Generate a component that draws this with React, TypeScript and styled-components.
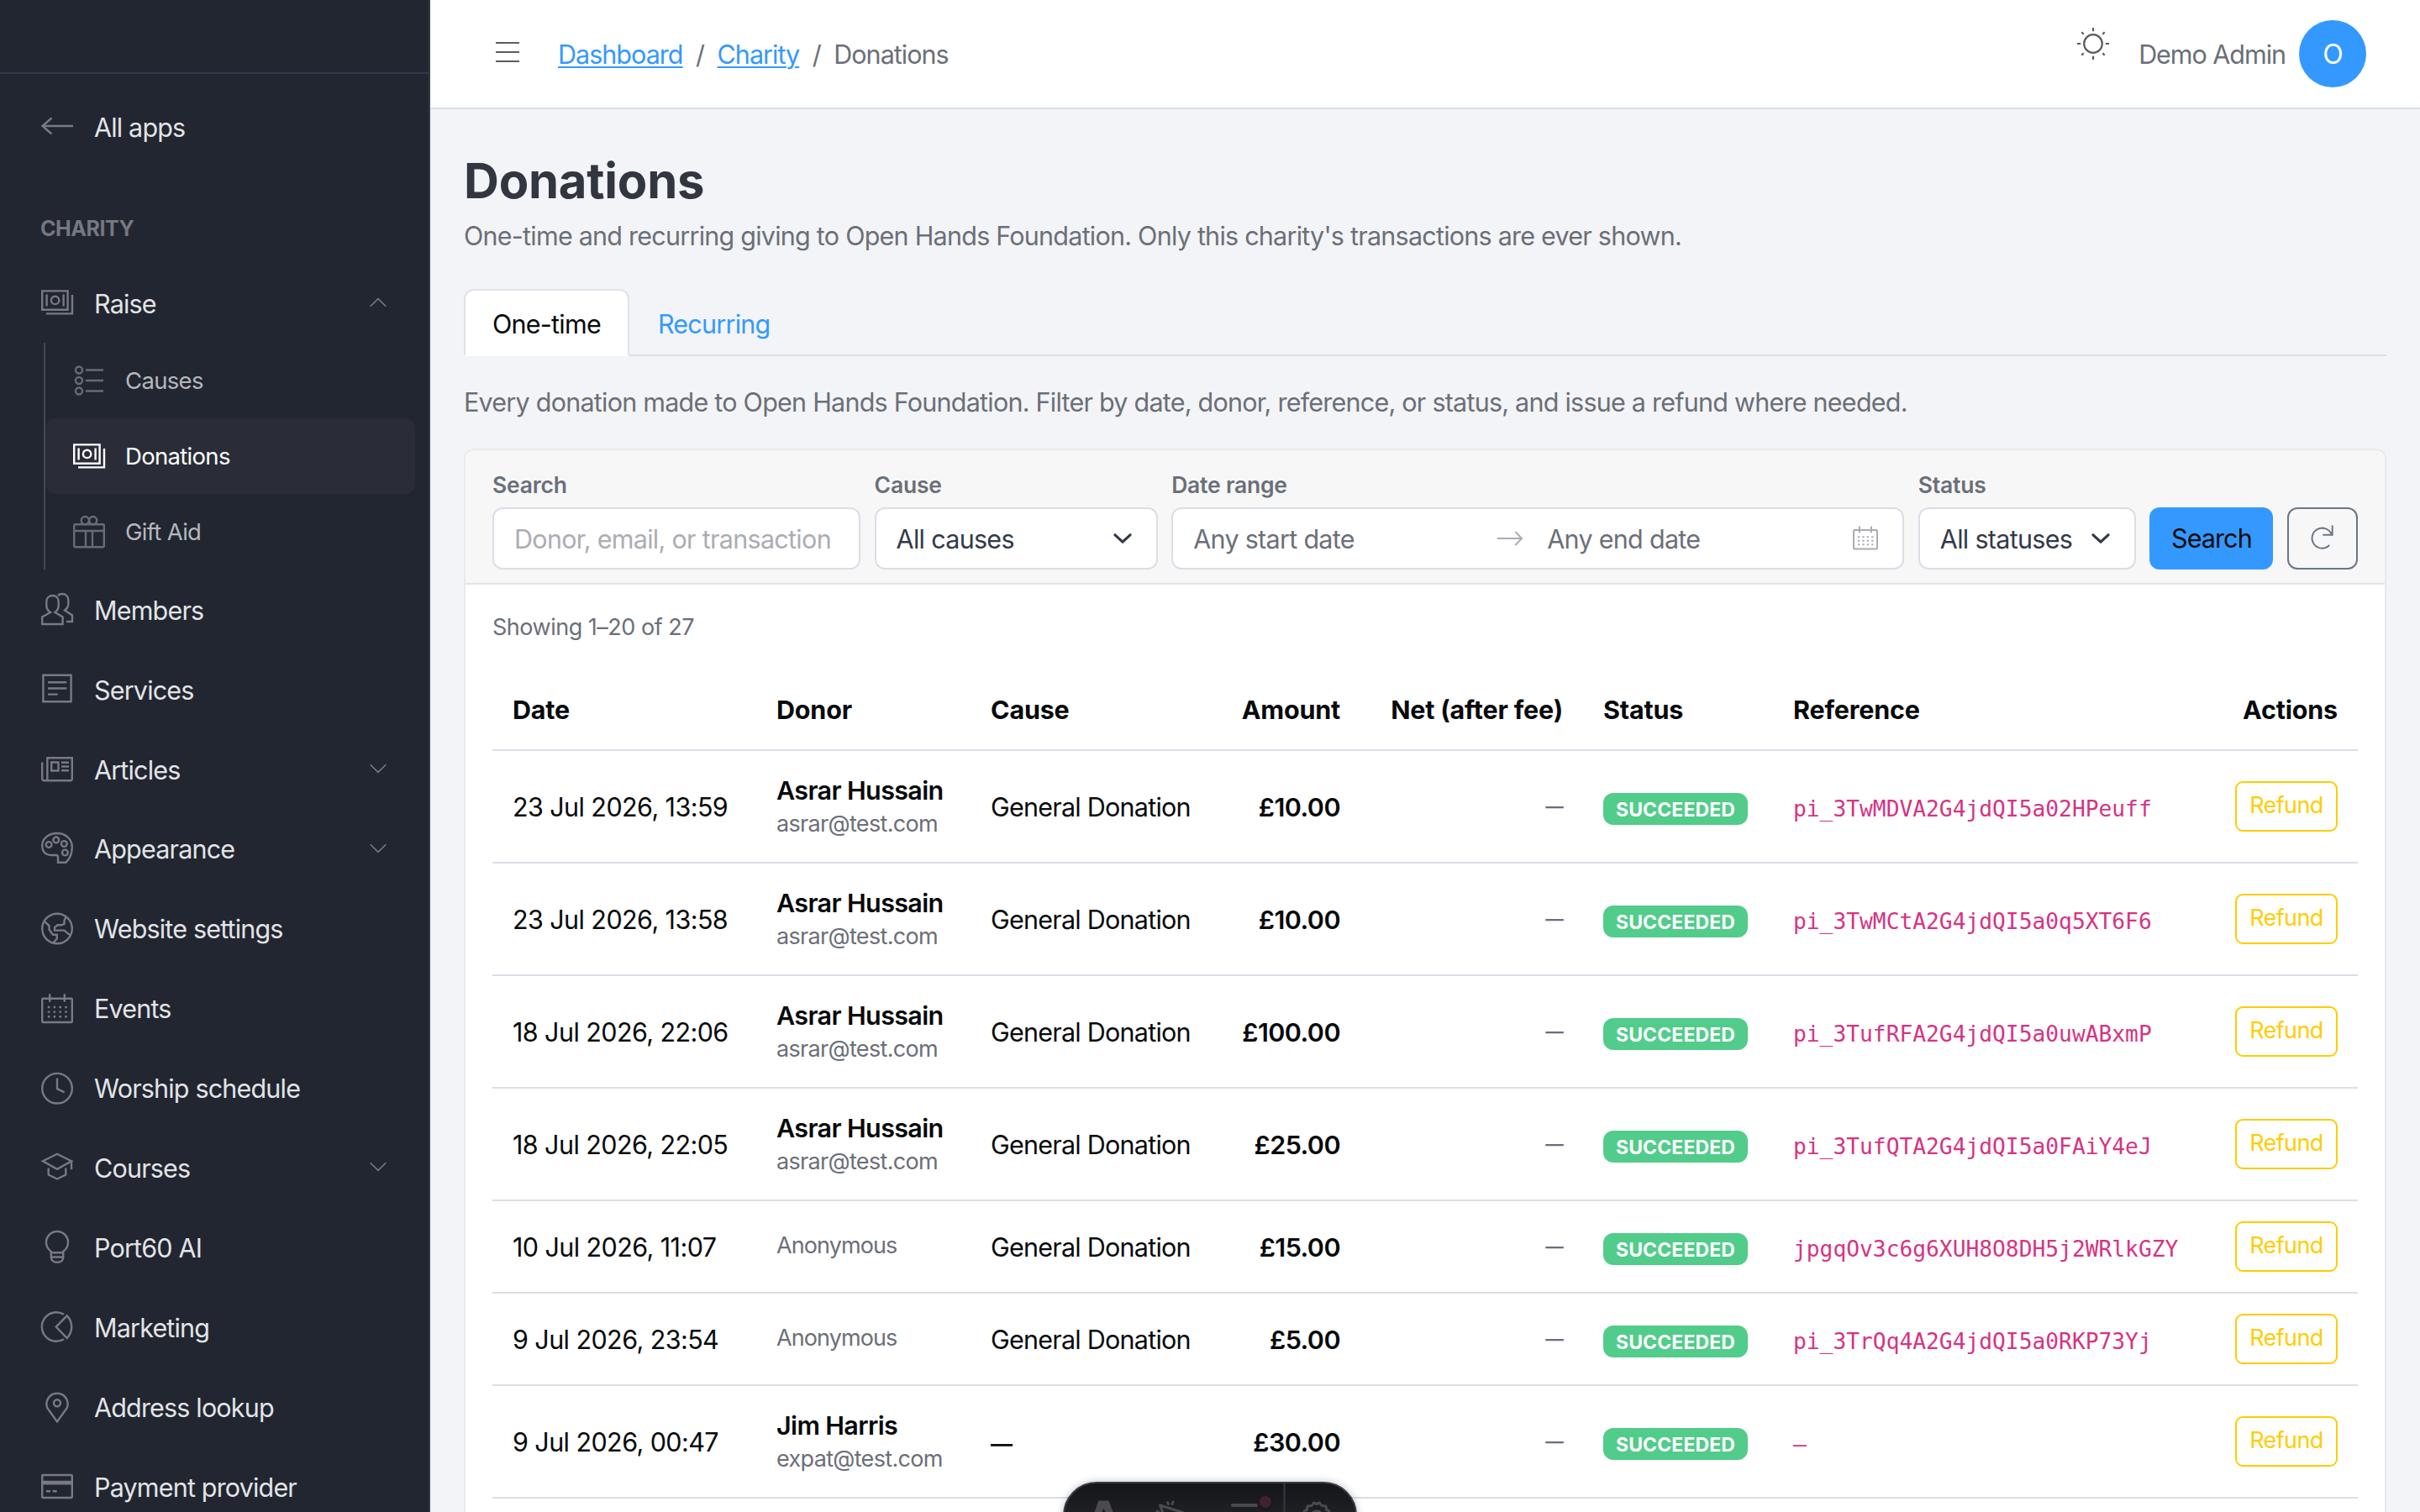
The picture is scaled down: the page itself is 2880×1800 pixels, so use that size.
import {memo, type ReactNode} from "react";
import styled, {createGlobalStyle, css} from "styled-components";

type IconName =
    | 'back' | 'money' | 'list' | 'gift' | 'people' | 'description' | 'newspaper' | 'palette'
    | 'globe' | 'calendar' | 'clock' | 'education' | 'bulb' | 'pie' | 'pin' | 'card';

const ICONS: Record<IconName, ReactNode> = {
    back: <path d="M13.5 10.5 2.5 20l11 9.5M2.5 20H39"/>,
    money: (
        <>
            <path d="M2.2 6.4h30.4v22.4H2.2zM38 11v22.4H7M7.6 10.5v14M27.6 10.5v14"/>
            <circle cx="17.6" cy="17.4" r="4.7"/>
        </>
    ),
    list: (
        <>
            <circle cx="8" cy="7.5" r="4"/>
            <circle cx="8" cy="20" r="4"/>
            <circle cx="8" cy="32.5" r="4"/>
            <path d="M16 7.5h21M16 20h21M16 32.5h21"/>
        </>
    ),
    gift: (
        <>
            <rect x="2.2" y="11.2" width="35.6" height="27" rx="1.5"/>
            <path d="M2.2 19h35.6M16 19v19M24 19v19"/>
            <circle cx="15.3" cy="6.6" r="4.6"/>
            <circle cx="24.7" cy="6.6" r="4.6"/>
        </>
    ),
    people: (
        <>
            <path d="M12 24C9 22 7.3 19 7.3 16v-4.5C7.3 7 10.3 4 14.5 4s7.2 3 7.2 7.5V16c0 3-1.7 6-4.3 8l9.2 5.5V38H2.2v-8.5z"/>
            <path d="M20.8 4C22.3 2.7 24 2 26 2c4.3 0 7.3 3 7.3 7.5V14c0 3-1.6 5.6-4.3 7.5l9 6V35h-7"/>
        </>
    ),
    description: <path d="M3.4 3.7h33.2v31.5H3.4zM9 12.3h22.3M9 19.5h22.3M9 26.6h11.7"/>,
    newspaper: <path d="M8.3 34.3V7.3h29.5V32a2.3 2.3 0 0 1-2.3 2.3H5A2.8 2.8 0 0 1 2.2 31.5v-19M13.2 12.5h8.3v10h-8.3zM25 12.8h9M25 17.5h9M25 22.3h9"/>,
    palette: (
        <>
            <path d="M20 2C10 2 2.2 8 2.2 16.5S7.5 28 12 28h6.5c1.700 0 2.5.9 2.5 2.5v6.2h9.5C35.5 32 37.8 25 37.8 18.5 37.8 9 30 2 20 2z"/>
            <circle cx="10.1" cy="15.5" r="3.4"/>
            <circle cx="18.8" cy="9.9" r="3.4"/>
            <circle cx="28.3" cy="14.5" r="3.4"/>
            <circle cx="29.4" cy="25" r="3.4"/>
        </>
    ),
    globe: (
        <>
            <circle cx="20" cy="20.5" r="17.8"/>
            <path d="M5.5 12.5 10.5 17v4.5L15 27.7h4.7v4.8L15.5 37.5M30.5 6.500 28.5 11v4l-3.5 1.2h-4.5L17 19v3.6h11.5l3.5 3 4 3"/>
        </>
    ),
    calendar: (
        <>
            <rect x="2.2" y="8.7" width="35.6" height="28.3" rx="1"/>
            <path d="M11.2 3.2v9.6M28.8 3.2v9.6"/>
            <path d="M8.800 19h24M8.8 24.6h24M8.8 30.2h24" strokeDasharray="2.6 4.2"/>
        </>
    ),
    clock: (
        <>
            <circle cx="20" cy="20.7" r="17.8"/>
            <path d="M20 8.5v12.7l8.7 4.2"/>
        </>
    ),
    education: <path d="M3 13.3 20 4.8l17 8.5L20 22.8zM37 13v10.3M9.7 21.5v8L20 34.5l10.3-5v-8"/>,
    bulb: (
        <>
            <path d="M12.8 27.3v-1.5A13 13 0 1 1 27.2 25.8v1.5z"/>
            <path d="M12.8 27v5.5h14.4V27M12.8 32.5c0 3.7 2.7 6.3 7.2 6.3s7.2-2.6 7.2-6.3"/>
        </>
    ),
    pie: <path d="M28 5.8A17.2 17.2 0 1 0 28 35.2M18.7 20.6 31.7 7.3C39 14.5 39 26.5 31.7 34z"/>,
    pin: (
        <>
            <path d="M20 38.5 8.5 22.5A12.600 12.6 0 1 1 31.5 22.5z"/>
            <circle cx="20" cy="16.3" r="4"/>
        </>
    ),
    card: (
        <>
            <rect x="2.2" y="7" width="35.6" height="27" rx="1"/>
            <path d="M2.2 16.1h35.6" strokeWidth="4.8"/>
            <path d="M7 26.2h5M14.7 26.2h5"/>
        </>
    ),
};

type NavEntry = {
    icon: IconName;
    label: string;
    expandable?: boolean;
}

const RAISE_ITEMS: NavEntry[] = [
    {icon: 'list', label: 'Causes'},
    {icon: 'money', label: 'Donations'},
    {icon: 'gift', label: 'Gift Aid'},
];

const NAV_ITEMS: NavEntry[] = [
    {icon: 'people', label: 'Members'},
    {icon: 'description', label: 'Services'},
    {icon: 'newspaper', label: 'Articles', expandable: true},
    {icon: 'palette', label: 'Appearance', expandable: true},
    {icon: 'globe', label: 'Website settings'},
    {icon: 'calendar', label: 'Events'},
    {icon: 'clock', label: 'Worship schedule'},
    {icon: 'education', label: 'Courses', expandable: true},
    {icon: 'bulb', label: 'Port60 AI'},
    {icon: 'pie', label: 'Marketing'},
    {icon: 'pin', label: 'Address lookup'},
    {icon: 'card', label: 'Payment provider'},
];

type Donation = {
    date: string;
    donor?: string;
    email?: string;
    cause?: string;
    amount: string;
    reference: string;
}

const DONATIONS: Donation[] = [
    {date: '23 Jul 2026, 13:59', donor: 'Asrar Hussain', email: 'asrar@test.com', cause: 'General Donation', amount: '£10.00', reference: 'pi_3TwMDVA2G4jdQI5a02HPeuff'},
    {date: '23 Jul 2026, 13:58', donor: 'Asrar Hussain', email: 'asrar@test.com', cause: 'General Donation', amount: '£10.00', reference: 'pi_3TwMCtA2G4jdQI5a0q5XT6F6'},
    {date: '18 Jul 2026, 22:06', donor: 'Asrar Hussain', email: 'asrar@test.com', cause: 'General Donation', amount: '£100.00', reference: 'pi_3TufRFA2G4jdQI5a0uwABxmP'},
    {date: '18 Jul 2026, 22:05', donor: 'Asrar Hussain', email: 'asrar@test.com', cause: 'General Donation', amount: '£25.00', reference: 'pi_3TufQTA2G4jdQI5a0FAiY4eJ'},
    {date: '10 Jul 2026, 11:07', cause: 'General Donation', amount: '£15.00', reference: 'jpgqOv3c6g6XUH8O8DH5j2WRlkGZY'},
    {date: '9 Jul 2026, 23:54', cause: 'General Donation', amount: '£5.00', reference: 'pi_3TrQq4A2G4jdQI5a0RKP73Yj'},
    {date: '9 Jul 2026, 00:47', donor: 'Jim Harris', email: 'expat@test.com', amount: '£30.00', reference: '—'},
];

const Icon = ({name}: { name: IconName }) => (
    <IconSvg viewBox="0 0 40 40">{ICONS[name]}</IconSvg>
);

const NavRow = ({icon, label, expandable, open}: NavEntry & { open?: boolean }) => (
    <NavLink>
        <Icon name={icon}/>
        <NavLabel>{label}</NavLabel>
        {(expandable || open) && (
            <Caret viewBox="0 0 20 12" $open={open}>
                <path d="M.7 1.3 10 10.3l9.3-9"/>
            </Caret>
        )}
    </NavLink>
);

const Sidebar = memo(() => (
    <Aside>
        <SidebarHeader/>
        <Nav>
            <NavRow icon="back" label="All apps"/>
            <NavTitle>Charity</NavTitle>
            <NavRow icon="money" label="Raise" open/>
            <NavGroup>
                {RAISE_ITEMS.map(item => (
                    <ChildLink key={item.label} $active={item.label === 'Donations'}>
                        <Icon name={item.icon}/>
                        <span>{item.label}</span>
                    </ChildLink>
                ))}
            </NavGroup>
            {NAV_ITEMS.map(item => <NavRow key={item.label} {...item}/>)}
        </Nav>
    </Aside>
));

const Header = () => (
    <TopBar>
        <MenuIcon viewBox="0 0 28 28">
            <path d="M0 3h28M0 14h28M0 25h28"/>
        </MenuIcon>
        <Breadcrumb>
            <a>Dashboard</a>
            <span>/</span>
            <a>Charity</a>
            <span>/</span>
            <span>Donations</span>
        </Breadcrumb>
        <SunIcon viewBox="0 0 38 38">
            <circle cx="19" cy="19" r="10.8"/>
            <path d="M19 0v4.2M19 33.8V38M0 19h4.2M33.8 19H38M5.3 5.3l2.4 2.4M30.3 30.3l2.4 2.4M5.3 32.7l2.4-2.4M30.3 7.7l2.4-2.4"/>
        </SunIcon>
        <UserName>Demo Admin</UserName>
        <Avatar>O</Avatar>
    </TopBar>
);

const SelectCaret = () => (
    <SelectArrow viewBox="0 0 22 12">
        <path d="M2 1.8 11 10.2l9-8.4"/>
    </SelectArrow>
);

const Filters = () => (
    <FilterBar>
        <Field $width="438px">
            <FieldLabel>Search</FieldLabel>
            <Control $muted>Donor, email, or transaction</Control>
        </Field>
        <Field $width="337px">
            <FieldLabel>Cause</FieldLabel>
            <Control>All causes<SelectCaret/></Control>
        </Field>
        <Field>
            <FieldLabel>Date range</FieldLabel>
            <DateControl>
                <StartDate>Any start date</StartDate>
                <RangeArrow viewBox="0 0 32 20">
                    <path d="M1 10h29M22.3 2l7.7 8-7.7 8"/>
                </RangeArrow>
                <EndDate>Any end date</EndDate>
                <RangeCalendar viewBox="0 0 32 32">
                    <rect x="2" y="6" width="28" height="22.6" rx="1"/>
                    <path d="M9 1.5v7.8M23 1.5v7.8"/>
                    <path d="M7 14.3h19M7 18.8h19M7 23.3h19" strokeDasharray="2.2 3.2"/>
                </RangeCalendar>
            </DateControl>
        </Field>
        <Field $width="259px">
            <FieldLabel>Status</FieldLabel>
            <Control>All statuses<SelectCaret/></Control>
        </Field>
        <SearchButton>Search</SearchButton>
        <ResetButton>
            <svg viewBox="0 0 32 32">
                <path d="M26.8 11.5A12 12 0 1 0 24.2 24M27.7.5v11.3H16.3"/>
            </svg>
        </ResetButton>
    </FilterBar>
);

const DonationRow = ({date, donor, email, cause, amount, reference}: Donation) => (
    <Row $tall={!!donor}>
        <DateCell>{date}</DateCell>
        <td>
            {donor ? (
                <>
                    <DonorName>{donor}</DonorName>
                    <DonorEmail>{email}</DonorEmail>
                </>
            ) : <Anonymous>Anonymous</Anonymous>}
        </td>
        <td>{cause ?? <NoCause>—</NoCause>}</td>
        <AmountCell>{amount}</AmountCell>
        <NetCell>—</NetCell>
        <td><Badge>SUCCEEDED</Badge></td>
        <td><Reference>{reference}</Reference></td>
        <td><RefundButton>Refund</RefundButton></td>
    </Row>
);

const DevToolbar = () => (
    <ToolbarPill>
        <svg viewBox="0 0 348 36">
            <path d="M34 38 40.5 20.5h12L59 38H50.500L46.500 29.500 42.500 38z" fill="#4b4b4f"/>
            <g fill="none" stroke="#4b4b4f" strokeWidth="3" strokeLinecap="round" strokeLinejoin="round">
                <path d="M119 40l-5.5-14 27 8.500M110 33l3 2M122.5 22.5l1 2M129 22l-1 2.5"/>
                <path d="M283.5 38l2-5.5 3-1 .5-4.5 5-.5 2.5-3.5 3.5 1.5 3.5-1.5 2.5 3.5 5 .5.5 4.500 3 1 2 5.5"/>
                <circle cx="300" cy="40" r="7"/>
            </g>
            <path d="M200 26h28" stroke="#4b4b4f" strokeWidth="4" strokeLinecap="round"/>
            <circle cx="239" cy="22" r="10" fill="#191a1e"/>
            <circle cx="239" cy="22" r="7" fill="#42212f"/>
            <path d="M261.500 0v36" stroke="#343841" strokeWidth="2"/>
        </svg>
    </ToolbarPill>
);

export default function App() {
    return (
        <>
            <GlobalStyle/>
            <Layout>
                <Sidebar/>
                <Main>
                    <Header/>
                    <Content>
                        <Title>Donations</Title>
                        <Lead>One-time and recurring giving to Open Hands Foundation. Only this charity's transactions are ever shown.</Lead>
                        <Tabs>
                            <Tab $active>One-time</Tab>
                            <Tab>Recurring</Tab>
                        </Tabs>
                        <Intro>Every donation made to Open Hands Foundation. Filter by date, donor, reference, or status, and issue a refund where needed.</Intro>
                        <Card>
                            <Filters/>
                            <CardBody>
                                <ResultCount>Showing 1–20 of 27</ResultCount>
                                <Table>
                                    <colgroup>
                                        <Col $width={314}/>
                                        <Col $width={255}/>
                                        <Col $width={290}/>
                                        <Col $width={174}/>
                                        <Col $width={265}/>
                                        <Col $width={226}/>
                                        <Col $width={520}/>
                                        <Col/>
                                    </colgroup>
                                    <thead>
                                        <tr>
                                            <Th>Date</Th>
                                            <Th>Donor</Th>
                                            <Th>Cause</Th>
                                            <Th $right>Amount</Th>
                                            <Th $right>Net (after fee)</Th>
                                            <Th>Status</Th>
                                            <Th>Reference</Th>
                                            <Th $right>Actions</Th>
                                        </tr>
                                    </thead>
                                    <tbody>
                                        {DONATIONS.map(item => <DonationRow key={item.date} {...item}/>)}
                                    </tbody>
                                </Table>
                            </CardBody>
                        </Card>
                    </Content>
                </Main>
            </Layout>
            <DevToolbar/>
        </>
    );
}

const GlobalStyle = createGlobalStyle`
    * {
        box-sizing: border-box;
    }

    body {
        margin: 0;
        overflow: hidden;
        background: #f3f4f7;
        color: #080a0c;
        font-family: Inter, "Liberation Sans", sans-serif;
        font-size: 30.5px;
        letter-spacing: -0.025em;
    }

    svg {
        display: block;
        flex: none;
    }
`;

const smallText = css`
    font-size: 27px;
    letter-spacing: -0.025em;
`;

const Layout = styled.div`
    display: flex;
    height: 1800px;
    overflow: hidden;
`;

const Aside = styled.aside`
    flex: 0 0 512px;
    border-right: 2px solid #323a49;
    background: #212631;
    color: #e3e4e6;
`;

const SidebarHeader = styled.div`
    height: 88px;
    border-bottom: 2px solid #323a49;
`;

const Nav = styled.nav`
    padding-top: 15px;
`;

const IconSvg = styled.svg`
    width: 40px;
    height: 40px;
    fill: none;
    stroke: #777a82;
    stroke-width: 2.4;
`;

const NavLink = styled.div`
    display: flex;
    align-items: center;
    height: 94.9px;
    padding: 0 50px 0 48px;
`;

const NavLabel = styled.span`
    flex: 1;
    margin-left: 24px;
    padding-top: 2px;
    letter-spacing: -0.027em;
`;

const Caret = styled.svg<{ $open?: boolean }>`
    width: 20px;
    height: 12px;
    fill: none;
    stroke: #777a82;
    stroke-width: 1.6;
    transform: ${({$open}) => $open ? 'rotate(180deg)' : 'none'};
`;

const NavTitle = styled.div`
    height: 115px;
    padding: 55px 48px 0;
    color: #75787f;
    font-size: 25px;
    font-weight: 700;
    line-height: 38px;
    letter-spacing: -0.018em;
    text-transform: uppercase;
`;

const NavGroup = styled.div`
    margin: 0 16px 0 52px;
    border-left: 2px solid #444852;
`;

const ChildLink = styled.div<{ $active?: boolean }>`
    display: flex;
    align-items: center;
    gap: 23px;
    height: 90px;
    padding-left: 32px;
    border-radius: 12px;
    background: ${({$active}) => $active ? '#2a2d38' : 'transparent'};
    color: ${({$active}) => $active ? '#ffffff' : '#b5b7bb'};
    font-size: 27.5px;
    letter-spacing: -0.025em;

    span {
        padding-top: 1px;
    }

    ${IconSvg} {
        stroke: ${({$active}) => $active ? '#ffffff' : '#676b73'};
    }
`;

const Main = styled.main`
    flex: 1;
    min-width: 0;
`;

const TopBar = styled.header`
    display: flex;
    align-items: center;
    height: 130px;
    padding: 0 64px 0 78px;
    border-bottom: 2px solid #d9dfe5;
    background: #ffffff;
    color: #6b6f78;
`;

const MenuIcon = styled.svg`
    width: 28px;
    height: 28px;
    margin-bottom: 5px;
    stroke: #5b5c5f;
    stroke-width: 2.2;
`;

const Breadcrumb = styled.div`
    display: flex;
    flex: 1;
    gap: 15.5px;
    margin-left: 46px;
    padding-top: 1px;
    letter-spacing: -0.032em;

    a {
        color: #3399ff;
        text-decoration: underline;
        text-decoration-thickness: 2px;
        text-underline-offset: 3px;
    }
`;

const SunIcon = styled.svg`
    width: 38px;
    height: 38px;
    margin: 0 35px 25px 0;
    fill: none;
    stroke: #5b5c5f;
    stroke-width: 2.2;
`;

const UserName = styled.span`
    margin-right: 16px;
    padding-top: 1px;
    letter-spacing: -0.034em;
`;

const Avatar = styled.div`
    display: flex;
    align-items: center;
    justify-content: center;
    width: 80px;
    height: 80px;
    border-radius: 50%;
    background: #3399ff;
    color: #ffffff;
    font-size: 32px;
`;

const Content = styled.div`
    padding: 49px 40px 0;
`;

const Title = styled.h1`
    margin: 0;
    color: #323641;
    font-size: 58px;
    font-weight: 700;
    line-height: 72px;
    letter-spacing: -0.004em;
`;

const Lead = styled.p`
    margin: 6px 0 39px;
    color: #6b6f78;
    line-height: 48px;
    white-space: nowrap;
`;

const Tabs = styled.div`
    display: flex;
    height: 80px;
    box-shadow: inset 0 -2px #d9dfe5;
`;

const Tab = styled.div<{ $active?: boolean }>`
    display: flex;
    align-items: center;
    padding: 2px 32px 0;
    border: 2px solid transparent;
    border-radius: 12px 12px 0 0;
    color: #3399ff;

    ${({$active}) => $active && css`
        border-color: #dfe2e7 #dfe2e7 #ffffff;
        background: #ffffff;
        color: #080a0c;
    `}
`;

const Intro = styled.p`
    margin: 31px 0;
    color: #6b6f78;
    line-height: 48px;
    white-space: nowrap;
`;

const Card = styled.section`
    height: 1400px;
    border: 2px solid #e9eaed;
    border-radius: 12px;
    background: #ffffff;
    overflow: hidden;
`;

const FilterBar = styled.div`
    display: flex;
    align-items: flex-end;
    gap: 16.6px;
    padding: 21px 32px 16px;
    border-bottom: 2px solid #e3e4e5;
    background: #f7f7f8;
`;

const Field = styled.div<{ $width?: string }>`
    flex: ${({$width}) => $width ? `0 0 ${$width}` : 1};
    min-width: 0;
`;

const FieldLabel = styled.div`
    margin-bottom: 7px;
    color: #6b6f78;
    font-size: 26.5px;
    font-weight: 600;
    line-height: 40px;
    letter-spacing: -0.008em;
`;

const Control = styled.div<{ $muted?: boolean }>`
    display: flex;
    align-items: center;
    justify-content: space-between;
    height: 74px;
    padding: 0 29px 0 24px;
    border: 2px solid #d9dfe6;
    border-radius: 12px;
    background: #ffffff;
    color: ${({$muted}) => $muted ? '#abadb3' : '#323a49'};
    letter-spacing: -0.023em;
    white-space: nowrap;
`;

const SelectArrow = styled.svg`
    width: 22px;
    height: 12px;
    fill: none;
    stroke: #323a49;
    stroke-width: 3.2;
    stroke-linecap: round;
    stroke-linejoin: round;
`;

const DateControl = styled(Control)`
    justify-content: flex-start;
    padding-right: 28px;
    color: #6b6f78;
`;

const StartDate = styled.span`
    width: 361px;
`;

const RangeArrow = styled.svg`
    width: 32px;
    height: 20px;
    margin-right: 28px;
    fill: none;
    stroke: #abacb3;
    stroke-width: 2;
`;

const EndDate = styled.span`
    flex: 1;
`;

const RangeCalendar = styled.svg`
    width: 32px;
    height: 32px;
    fill: none;
    stroke: #abacb3;
    stroke-width: 2;
`;

const SearchButton = styled.div`
    flex: none;
    width: 147px;
    border-radius: 12px;
    background: #3399ff;
    line-height: 74px;
    letter-spacing: -0.03em;
    text-align: center;
`;

const ResetButton = styled.div`
    display: flex;
    align-items: center;
    justify-content: center;
    width: 84px;
    height: 74px;
    border: 2px solid #6b7785;
    border-radius: 12px;

    svg {
        width: 32px;
        height: 32px;
        fill: none;
        stroke: #6b7785;
        stroke-width: 2;
    }
`;

const CardBody = styled.div`
    padding: 31px 32px 0;
`;

const ResultCount = styled.div`
    color: #6b6f78;
    font-size: 27px;
    line-height: 40px;
    letter-spacing: -0.018em;
`;

const Table = styled.table`
    width: 100%;
    margin-top: 30px;
    border-spacing: 0;
    table-layout: fixed;

    th, td {
        padding: 0 24px;
        border-bottom: 2px solid #d9dfe5;
        white-space: nowrap;
    }
`;

const Col = styled.col<{ $width?: number }>`
    width: ${({$width}) => $width ? `${$width}px` : 'auto'};
`;

const Th = styled.th<{ $right?: boolean }>`
    height: 97px;
    font-weight: 700;
    letter-spacing: -0.006em;
    text-align: ${({$right}) => $right ? 'right' : 'left'};
`;

const Row = styled.tr<{ $tall?: boolean }>`
    height: ${({$tall}) => $tall ? 134 : 110}px;
`;

const DateCell = styled.td`
    letter-spacing: -0.019em;
`;

const DonorName = styled.div`
    font-weight: 600;
    line-height: 42px;
    letter-spacing: -0.021em;
`;

const DonorEmail = styled.div`
    color: #6b6f78;
    line-height: 38px;
    ${smallText}
`;

const Anonymous = styled.div`
    margin-bottom: 3px;
    color: #6b6f78;
    ${smallText}
    letter-spacing: -0.034em;
`;

const NoCause = styled.span`
    font-size: 26px;
    font-weight: 600;
`;

const AmountCell = styled.td`
    font-weight: 600;
    letter-spacing: -0.018em;
    text-align: right;
`;

const NetCell = styled.td`
    color: #6b6f78;
    font-size: 21.5px;
    font-weight: 600;
    text-align: right;
`;

const Badge = styled.div`
    width: 172px;
    height: 38px;
    margin-top: 5px;
    border-radius: 12px;
    background: #51cc8a;
    color: #ffffff;
    font-size: 23px;
    font-weight: 700;
    line-height: 40px;
    letter-spacing: 0.005em;
    text-align: center;
`;

const Reference = styled.code`
    color: #d63384;
    font-family: "DejaVu Sans Mono", monospace;
    font-size: 26.25px;
    letter-spacing: 0;
`;

const RefundButton = styled.div`
    width: 122px;
    height: 60px;
    margin-left: auto;
    border: 2px solid #ffcc00;
    border-radius: 9px;
    color: #ffcc00;
    font-size: 27px;
    line-height: 54px;
    letter-spacing: -0.022em;
    text-align: center;
`;

const ToolbarPill = styled.div`
    position: fixed;
    bottom: -44px;
    left: 1265px;
    width: 350px;
    height: 80px;
    border: 2px solid #363b46;
    border-radius: 40px;
    background: linear-gradient(#14151a, #202125 50%);
    box-shadow: 0 0 10px rgba(0, 0, 0, 0.25);
    overflow: hidden;

    svg {
        width: 348px;
        height: 36px;
        overflow: visible;
    }
`;
